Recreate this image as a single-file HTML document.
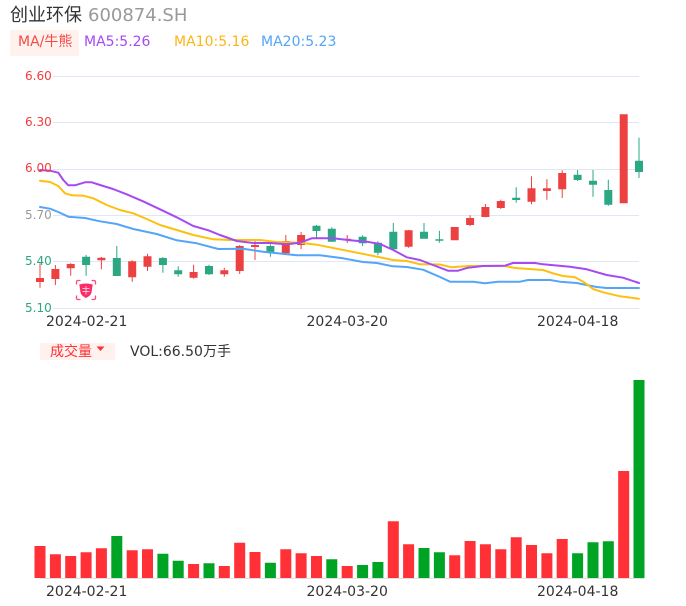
<!DOCTYPE html>
<html><head><meta charset="utf-8">
<style>
html,body{margin:0;padding:0;background:#fff;width:686px;height:606px;overflow:hidden}
body{position:relative;font-family:"DejaVu Sans","WenQuanYi Zen Hei",sans-serif}
.t{position:absolute;white-space:nowrap;line-height:20px;height:20px}
.y{font-size:12px;left:25px}
.d{font-size:14px;color:#333}
.b{position:absolute;background:#fff2ee}
svg{position:absolute;left:0;top:0}
</style></head><body>
<div class="b" style="left:40px;top:343px;width:75px;height:17px"></div>
<svg width="686" height="606" viewBox="0 0 686 606">
<g fill="#e2e5f3">
<rect x="53" y="76" width="586" height="1"/><rect x="53" y="122" width="586" height="1"/><rect x="53" y="169" width="586" height="1"/><rect x="53" y="215" width="586" height="1"/><rect x="53" y="261" width="586" height="1"/><rect x="53" y="308" width="586" height="1"/>
</g>
<path fill="none" stroke="#ec4141" stroke-width="1" d="M40 263.3V287.7M55.4 265V285M70.7 263.3V275.7M101.4 257V269.3M132.2 260.3V281.7M147.5 253.7V271M193.6 264.7V278.7M224.3 267.7V276.7M239.7 245V274M255 241V260M285.8 235V253.3M301.1 232V249M347.2 235V243M408.6 230V247.7M470.1 215.3V226M485.4 204V217.3M500.8 199.7V209M531.5 176.3V204.3M546.9 179.3V199.7M562.2 170.3V198"/>
<path fill="#ec4141" d="M36 278h8v4h-8zM51.4 269h8v10h-8zM66.7 264h8v4.3h-8zM97.4 257.7h8v2.6h-8zM128.2 261.3h8v16h-8zM143.5 256.3h8v10.4h-8zM189.6 272h8v5.7h-8zM220.3 270.3h8v4h-8zM235.7 246h8v25h-8zM251 245h8v2h-8zM281.8 241h8v12.3h-8zM297.1 235h8v10h-8zM343.2 238.7h8v1h-8zM404.6 230.3h8v16.4h-8zM450.7 227h8v13.3h-8zM466.1 218h8v7h-8zM481.4 207h8v10h-8zM496.8 201h8v7h-8zM527.5 188.3h8v13.4h-8zM542.9 188.3h8v2.7h-8zM558.2 173h8v16.3h-8zM619.7 114.3h8v89h-8z"/>
<path fill="none" stroke="#2ba784" stroke-width="1" d="M86.1 255V275.7M116.8 246V276M162.9 257V272.7M178.2 266.3V276.7M209 264.7V275M270.4 244.3V256.7M316.5 225V237.7M331.8 227.3V241.7M362.6 235.3V246M377.9 241.3V255.3M393.3 223V250M424 223V238.7M439.4 230.7V242.7M516.2 187.3V202.7M577.6 170V181M593 170V196.7M608.3 179.7V205.7M639 137.7V178"/>
<path fill="#2ba784" d="M82.1 256.7h8v8.3h-8zM112.8 258h8v18h-8zM158.9 258h8v7h-8zM174.2 270.3h8v4h-8zM205 266h8v8.3h-8zM266.4 246h8v6h-8zM312.5 225.7h8v5.3h-8zM327.8 228.7h8v13h-8zM358.6 236.7h8v6.6h-8zM373.9 242.7h8v10h-8zM389.3 231.7h8v17.6h-8zM420 231.7h8v7h-8zM435.4 239.3h8v1.4h-8zM512.2 197.7h8v2.3h-8zM573.6 174.7h8v5.3h-8zM589 180.7h8v4h-8zM604.3 190h8v14.7h-8zM635 160.7h8v11.3h-8z"/>
<g fill="none" stroke-width="2" stroke-linejoin="round" stroke-linecap="round">
<polyline stroke="#53a5f8" points="40,207 50,208.7 58.3,212 68.3,216.7 85,218 100,221.3 116.7,224 133.3,229 156.7,234 176.7,240.3 196.7,243.3 218.3,249 243,248.7 263,251.7 296.7,255.3 320,255.3 343,258.3 363,262 376.7,263 393,266.3 406.7,267 423,269.7 440,277 450,281.7 473,281.7 485,283.3 498,281.7 520,281.7 528,280 550,280 560,281.7 576.7,283 596.7,287 606.7,288 639,288"/>
<polyline stroke="#fdc00f" points="40,180.7 50,182 58.3,186 65,193.3 71.7,195.3 83.3,195.7 93.3,198.3 106.7,205 120,210 133.3,213.3 146.7,219 160,225 176.7,230 193.3,235 213.3,239.3 230,240 260,240 276.7,242 300,242.7 316.7,244.7 336.7,248.7 360,253.3 380,257.3 393,260 406.7,261 420,264.3 440,264.5 451.7,267.3 468.3,266 503,265.7 515,268 543,270 553,273.3 563,276 575,277.3 583.3,281.7 593,289 603.3,292.3 620,296.3 639,298.7"/>
<polyline stroke="#a549f3" points="40,170 50,170.7 58.3,172.7 63.3,180 68.3,185.3 75,185.3 85,182.3 91.7,182.3 100,185 113,189 126.7,194.3 143,201.3 160,209.3 176.7,217.3 193.3,226 208.3,230.3 220,235 236.7,241 253.3,243 270,243 286.7,244.3 300,242.7 311.7,238.3 333,238.3 350,240.3 366.7,241.7 380,244 393.3,250 406.7,257.3 420,260 433,265 448,270.7 458,270.7 468,267.7 483,266 505,265.7 513,263 535,263 543,264.3 570,266.7 586.7,269.3 606.7,275 623,277.7 639,283"/>
</g>
<!-- bull icon -->
<g fill="none" stroke="#fb4d80" stroke-width="1.3">
<path d="M76.500 284.500V282Q76.500 280.500 78 280.500H80.500M91.500 280.500H94Q95.500 280.500 95.500 282V284.500M76.500 295.500V298Q76.500 299.500 78 299.500H80.500M91.500 299.500H94Q95.500 299.500 95.500 298V295.500"/>
</g>
<path d="M79.300 284.500Q86 282.500 92.700 284.500L91.500 292.500Q91 295.500 86 298Q81 295.500 80.500 292.500Z" fill="#fb2c66"/>
<path d="M82.500 288.500H89.500M82.500 291.500H89.500M86 286V294.500" stroke="#ffc4d4" stroke-width="1" fill="none"/>
<!-- triangle -->
<path d="M96.500 346.500H104.500L100.500 351Z" fill="#ff3036"/>
<!-- volume -->
<path fill="#ff3036" d="M34.500 546h11v32h-11zM49.900 554.300h11v23.700h-11zM65.200 556h11v22h-11zM80.600 552.300h11v25.700h-11zM95.900 548.300h11v29.700h-11zM126.700 550.300h11v27.700h-11zM142 549.300h11v28.700h-11zM188.100 564h11v14h-11zM218.800 566h11v12h-11zM234.200 542.700h11v35.300h-11zM249.500 552h11v26h-11zM280.300 549.300h11v28.700h-11zM295.600 553.300h11v24.700h-11zM311 556h11v22h-11zM341.700 566h11v12h-11zM387.800 521.300h11v56.700h-11zM403.100 544.300h11v33.700h-11zM449.200 555.300h11v22.700h-11zM464.600 541h11v37h-11zM479.900 544.300h11v33.700h-11zM495.300 549.300h11v28.700h-11zM510.700 537.300h11v40.700h-11zM526 545h11v33h-11zM541.400 553.300h11v24.700h-11zM556.700 539h11v39h-11zM618.200 471h11v107h-11z"/>
<path fill="#00a424" d="M111.300 536h11v42h-11zM157.400 553.700h11v24.300h-11zM172.700 560.700h11v17.300h-11zM203.500 563.300h11v14.700h-11zM264.900 562.700h11v15.300h-11zM326.300 559.300h11v18.700h-11zM357.100 565h11v13h-11zM372.400 562h11v16h-11zM418.500 548h11v30h-11zM433.900 552.300h11v25.700h-11zM572.100 553.300h11v24.700h-11zM587.500 542.300h11v35.700h-11zM602.800 541.300h11v36.700h-11zM633.500 380h11v198h-11z"/>
<rect x="40" y="578" width="604" height="1" fill="#e0e0e0"/>
</svg>
<div class="t" style="left:10px;top:6px;font-size:18px;color:#333">创业环保</div>
<div class="t" style="left:88px;top:6px;font-size:18px;color:#999">600874.SH</div>
<div class="b" style="left:10px;top:30px;width:69px;height:26px"></div>
<div class="t" style="left:18px;top:32px;font-size:14px;color:#f54a45">MA/牛熊</div>
<div class="t" style="left:84px;top:32px;font-size:14px;color:#a549f3">MA5:5.26</div>
<div class="t" style="left:174px;top:32px;font-size:14px;color:#fdb515">MA10:5.16</div>
<div class="t" style="left:261px;top:32px;font-size:14px;color:#53a5f8">MA20:5.23</div>
<div class="t y" style="top:66px;color:#f53a3a">6.60</div>
<div class="t y" style="top:112px;color:#f53a3a">6.30</div>
<div class="t y" style="top:158px;color:#f53a3a">6.00</div>
<div class="t y" style="top:205px;color:#999">5.70</div>
<div class="t y" style="top:251px;color:#2ba784">5.40</div>
<div class="t y" style="top:298px;color:#2ba784">5.10</div>
<div class="t d" style="left:46px;top:312px">2024-02-21</div>
<div class="t d" style="left:306.500px;top:312px">2024-03-20</div>
<div class="t d" style="left:537px;top:312px">2024-04-18</div>
<div class="t" style="left:50px;top:342px;font-size:14px;color:#ff3036">成交量</div>
<div class="t" style="left:130px;top:342px;font-size:14px;color:#333">VOL:66.50万手</div>
<div class="t d" style="left:46px;top:582px">2024-02-21</div>
<div class="t d" style="left:306.500px;top:582px">2024-03-20</div>
<div class="t d" style="left:537px;top:582px">2024-04-18</div>
</body></html>
